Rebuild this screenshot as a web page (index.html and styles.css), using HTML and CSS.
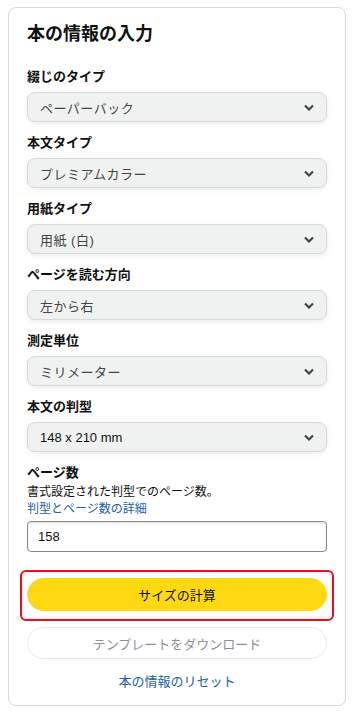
FILE: index.html
```html
<!DOCTYPE html>
<html lang="ja">
<head>
  <meta charset="UTF-8">
  <meta name="viewport" content="width=device-width, initial-scale=1">
  <title>本の情報の入力</title>
  <link rel="stylesheet" href="styles.css">
</head>
<body>
  <section class="card">
    <h1>本の情報の入力</h1>

    <div class="field">
      <label>綴じのタイプ</label>
      <div class="select"><span>ペーパーバック</span><svg class="chev" viewBox="0 0 10 6"><path d="M1 1l4 4 4-4"/></svg></div>
    </div>
    <div class="field">
      <label>本文タイプ</label>
      <div class="select"><span>プレミアムカラー</span><svg class="chev" viewBox="0 0 10 6"><path d="M1 1l4 4 4-4"/></svg></div>
    </div>
    <div class="field">
      <label>用紙タイプ</label>
      <div class="select"><span>用紙 (白)</span><svg class="chev" viewBox="0 0 10 6"><path d="M1 1l4 4 4-4"/></svg></div>
    </div>
    <div class="field">
      <label>ページを読む方向</label>
      <div class="select"><span>左から右</span><svg class="chev" viewBox="0 0 10 6"><path d="M1 1l4 4 4-4"/></svg></div>
    </div>
    <div class="field">
      <label>測定単位</label>
      <div class="select"><span>ミリメーター</span><svg class="chev" viewBox="0 0 10 6"><path d="M1 1l4 4 4-4"/></svg></div>
    </div>
    <div class="field">
      <label>本文の判型</label>
      <div class="select dark"><span>148 x 210 mm</span><svg class="chev" viewBox="0 0 10 6"><path d="M1 1l4 4 4-4"/></svg></div>
    </div>
    <div class="field pages">
      <label>ページ数</label>
      <p class="hint">書式設定された判型でのページ数。</p>
      <a class="link" href="#">判型とページ数の詳細</a>
      <div class="input">158</div>
    </div>

    <div class="actions">
      <div class="focus-ring"><button class="btn primary">サイズの計算</button></div>
      <button class="btn secondary" disabled>テンプレートをダウンロード</button>
      <a class="link reset" href="#">本の情報のリセット</a>
    </div>
  </section>
</body>
</html>
```

FILE: styles.css
```css
body {
  margin: 7px 8px;
  font-family: "Liberation Sans", "Noto Sans CJK JP", sans-serif;
  background: #fff;
  color: #0f1111;
}
.card {
  width: 338px;
  box-sizing: border-box;
  border: 1px solid #d5d9d9;
  border-radius: 8px;
  padding: 14px 18px 14px;
}
h1 {
  margin: 0 0 22px;
  font-size: 18px;
  line-height: 24px;
  font-weight: 700;
}
.field {
  margin-bottom: 12px;
}
.field label {
  display: block;
  font-size: 13px;
  line-height: 18px;
  font-weight: 700;
  margin-bottom: 6px;
}
.select {
  height: 30px;
  box-sizing: border-box;
  display: flex;
  align-items: center;
  justify-content: space-between;
  padding: 0 12px 0 12px;
  background: #f0f2f2;
  border: 1px solid #d5d9d9;
  border-radius: 8px;
  box-shadow: 0 2px 5px rgba(15, 17, 17, 0.08);
  font-size: 13px;
  color: #444;
}
.select span {
  letter-spacing: 0.5px;
}
.select.dark {
  color: #0f1111;
}
.select.dark span {
  letter-spacing: 0;
}
.chev {
  width: 10px;
  height: 7px;
  fill: none;
  stroke: #444;
  stroke-width: 2.2;
}
.pages label {
  margin-bottom: 2px;
}
.hint {
  margin: 0;
  font-size: 12px;
  line-height: 17px;
  color: #0f1111;
}
.link {
  display: block;
  font-size: 12px;
  line-height: 17px;
  color: #2162a1;
  text-decoration: none;
}
.input {
  margin-top: 3px;
  height: 31px;
  box-sizing: border-box;
  border: 1px solid #888c8c;
  border-radius: 4px;
  padding: 0 10px;
  display: flex;
  align-items: center;
  font-size: 13px;
  box-shadow: inset 0 1px 2px rgba(15, 17, 17, 0.15);
}
.actions {
  margin-top: 18px;
  display: flex;
  flex-direction: column;
  align-items: stretch;
}
.focus-ring {
  margin: 0 -7px 6px;
  padding: 6px 5px 8px;
  border: 2px solid #e3101f;
  border-radius: 6px;
  box-shadow: inset 0 0 4px rgba(0, 0, 0, 0.12);
}
.btn {
  width: 100%;
  height: 33px;
  border-radius: 100px;
  font-family: inherit;
  font-size: 13px;
  cursor: pointer;
}
.primary {
  display: block;
  background: #ffd814;
  border: 1px solid #ffd814;
  color: #0f1111;
}
.secondary {
  height: 32px;
  background: #fff;
  border: 1px solid #e7e9ec;
  color: #8d9096;
  cursor: not-allowed;
}
.reset {
  text-align: center;
  font-size: 13px;
  line-height: 18px;
  margin-top: 14px;
}
```
